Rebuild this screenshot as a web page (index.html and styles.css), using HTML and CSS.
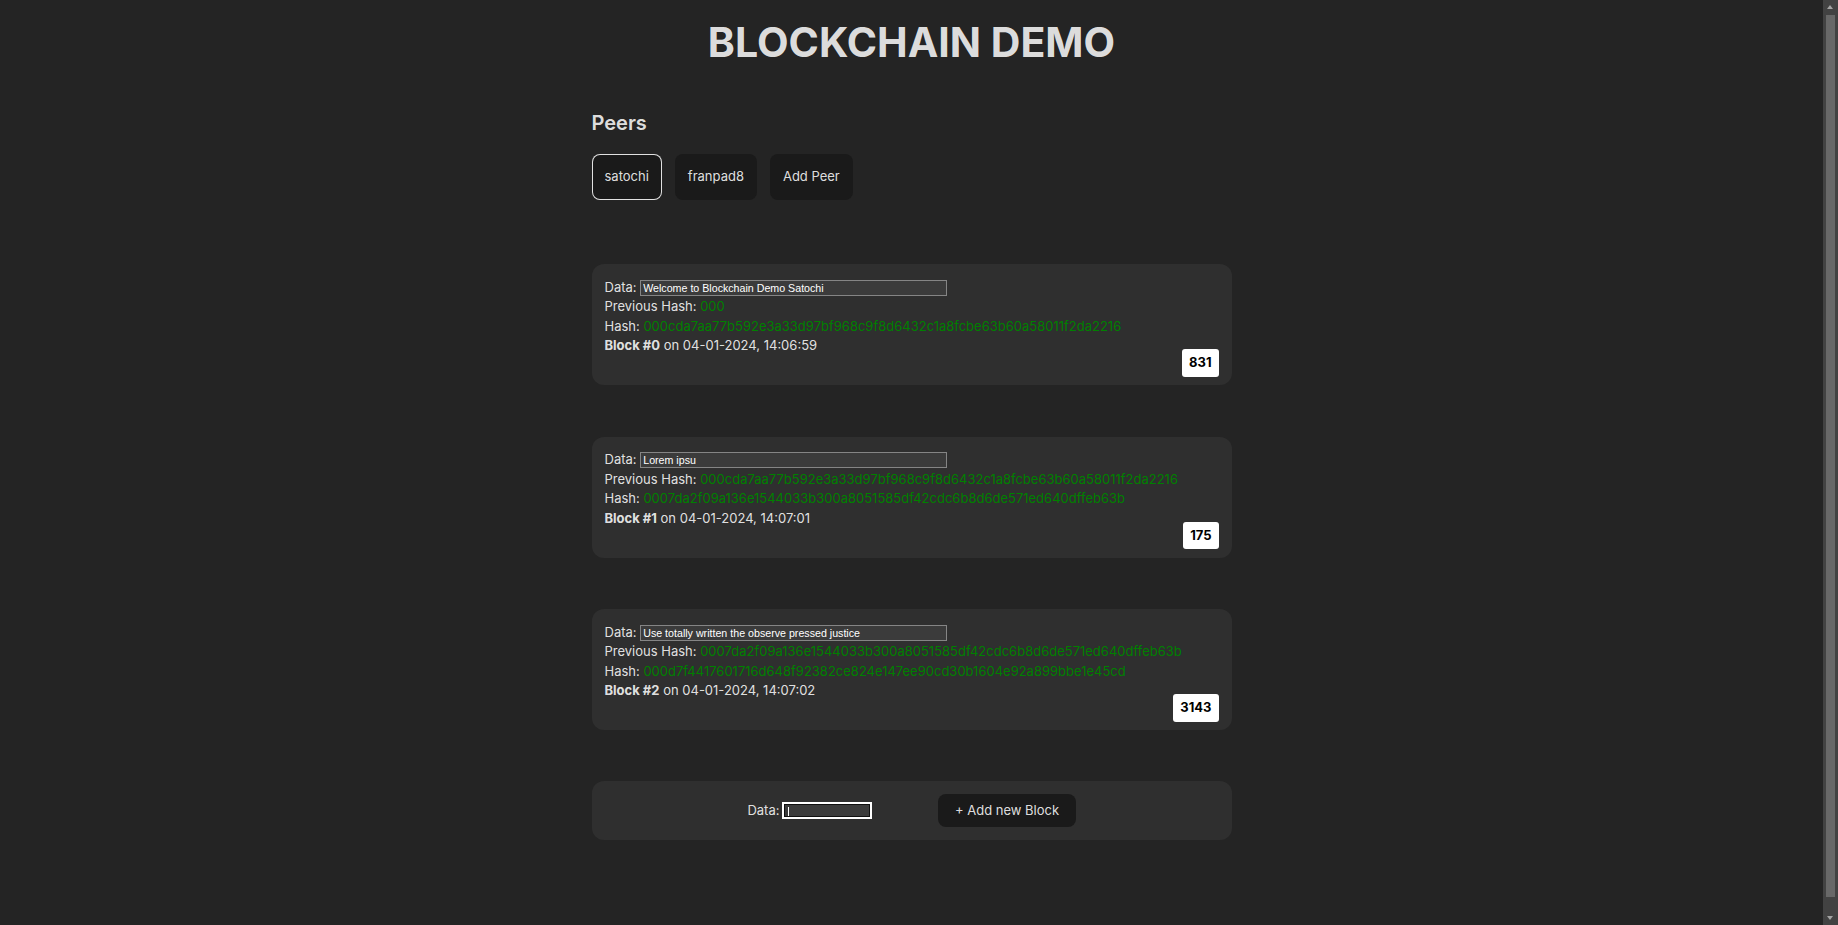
FILE: index.html
```html
<!DOCTYPE html>
<html lang="en">
<head>
<meta charset="utf-8">
<title>Blockchain Demo</title>
<link rel="stylesheet" href="styles.css">
</head>
<body>
<h1 class="title">BLOCKCHAIN DEMO</h1>
<main class="container">
  <h2 class="peers-title">Peers</h2>
  <div class="peers">
    <button class="peer-btn selected">satochi</button>
    <button class="peer-btn">franpad8</button>
    <button class="peer-btn">Add Peer</button>
  </div>

  <section class="blocks">
    <div class="block">
      <div class="line">Data: <input class="data-input" type="text" value="Welcome to Blockchain Demo Satochi"></div>
      <div class="line">Previous Hash: <span class="hash">000</span></div>
      <div class="line">Hash: <span class="hash">000cda7aa77b592e3a33d97bf968c9f8d6432c1a8fcbe63b60a58011f2da2216</span></div>
      <div class="line"><b>Block #0</b> on 04-01-2024, 14:06:59</div>
      <span class="nonce">831</span>
    </div>

    <div class="block">
      <div class="line">Data: <input class="data-input" type="text" value="Lorem ipsu"></div>
      <div class="line">Previous Hash: <span class="hash">000cda7aa77b592e3a33d97bf968c9f8d6432c1a8fcbe63b60a58011f2da2216</span></div>
      <div class="line">Hash: <span class="hash">0007da2f09a136e1544033b300a8051585df42cdc6b8d6de571ed640dffeb63b</span></div>
      <div class="line"><b>Block #1</b> on 04-01-2024, 14:07:01</div>
      <span class="nonce">175</span>
    </div>

    <div class="block">
      <div class="line">Data: <input class="data-input" type="text" value="Use totally written the observe pressed justice"></div>
      <div class="line">Previous Hash: <span class="hash">0007da2f09a136e1544033b300a8051585df42cdc6b8d6de571ed640dffeb63b</span></div>
      <div class="line">Hash: <span class="hash">000d7f4417601716d648f92382ce824e147ee90cd30b1604e92a899bbe1e45cd</span></div>
      <div class="line"><b>Block #2</b> on 04-01-2024, 14:07:02</div>
      <span class="nonce">3143</span>
    </div>
  </section>

  <div class="add-card">
    <label class="add-label">Data: <input class="add-input" type="text" value=""></label>
    <button class="add-btn">+ Add new Block</button>
  </div>
</main>
<div class="scrollbar" aria-hidden="true">
  <span class="sb-arrow up"></span>
  <span class="sb-thumb"></span>
  <span class="sb-arrow down"></span>
</div>
</body>
</html>
```

FILE: styles.css
```css
:root {
  color-scheme: dark;
  background-color: #242424;
  color: rgba(255, 255, 255, 0.87);
  font-family: Inter, "Noto Sans", sans-serif;
  line-height: 1.5;
  font-weight: 400;
}

body {
  margin: 0 15px 0 0;
  font-size: 13px;
}

.title {
  margin: 20px 0 0;
  text-align: center;
  font-size: 41px;
  line-height: 44px;
  font-weight: 700;
}

.container {
  width: 640px;
  margin: 0 auto;
}

.peers-title {
  margin: 44px 0 16px;
  font-size: 20px;
  line-height: 30px;
  font-weight: 600;
}

.peers {
  display: flex;
  gap: 13px;
}

.peer-btn {
  font-family: Inter, "Noto Sans", sans-serif;
  font-size: 13px;
  line-height: 19.5px;
  font-weight: 400;
  color: rgba(255, 255, 255, 0.87);
  background: #1a1a1a;
  border: 1px solid transparent;
  border-radius: 8px;
  padding: 12px 12px;
  cursor: pointer;
}

.peer-btn.selected {
  border-color: rgba(255, 255, 255, 0.87);
}

.blocks {
  margin-top: 64.5px;
  display: flex;
  flex-direction: column;
  gap: 51.5px;
}

.block {
  display: flex;
  flex-direction: column;
  background: #2f2f2f;
  border-radius: 12px;
  padding: 13.5px 13px 8.5px 13px;
}

.line {
  height: 19.5px;
  white-space: nowrap;
}

.line b {
  font-weight: 700;
}

.hash {
  color: #008000;
}

.data-input {
  width: 307px;
  box-sizing: border-box;
  font-family: "Liberation Sans", Arial, sans-serif;
  font-size: 10.67px;
  color: #ffffff;
  background: #3b3b3b;
  border: 1px solid #858585;
  padding: 1px 2px;
  margin: 0;
  vertical-align: baseline;
}

.nonce {
  align-self: flex-end;
  margin-top: -6.5px;
  background: #ffffff;
  color: #000000;
  font-weight: 700;
  font-size: 13px;
  line-height: 19.5px;
  padding: 4px 7px;
  border-radius: 3px;
}

.add-card {
  margin-top: 51px;
  display: flex;
  justify-content: center;
  align-items: center;
  gap: 66px;
  background: #2f2f2f;
  border-radius: 12px;
  padding: 12.5px 13px;
}

.add-label {
  display: flex;
  align-items: center;
  gap: 3px;
}

.add-input {
  width: 90px;
  height: 17px;
  box-sizing: border-box;
  margin: 0;
  padding: 0 2px;
  border: 2px solid #ffffff;
  box-shadow: inset 0 0 0 1px #101010;
  background: linear-gradient(#ffffff, #ffffff) no-repeat 4px 3px / 1px 11px, #3b3b3b;
  outline: none;
}

.add-btn {
  font-family: Inter, "Noto Sans", sans-serif;
  font-size: 13px;
  line-height: 19.5px;
  font-weight: 400;
  color: rgba(255, 255, 255, 0.87);
  background: #1a1a1a;
  border: 1px solid transparent;
  border-radius: 8px;
  padding: 6px 15.5px;
  cursor: pointer;
}

.scrollbar {
  position: fixed;
  top: 0;
  right: 0;
  width: 15px;
  height: 100%;
  background: #424242;
  display: flex;
  flex-direction: column;
  align-items: center;
}

.sb-arrow {
  height: 15px;
  width: 15px;
  flex: none;
  position: relative;
}

.sb-arrow::after {
  content: "";
  position: absolute;
  left: 4px;
  border-left: 3.5px solid transparent;
  border-right: 3.5px solid transparent;
}

.sb-arrow.up::after {
  top: 5px;
  border-bottom: 4px solid #a3a3a3;
}

.sb-arrow.down::after {
  top: 6px;
  border-top: 4px solid #a3a3a3;
}

.sb-thumb {
  width: 9px;
  flex: 1;
  margin-bottom: 13px;
  background: #686868;
}
```
